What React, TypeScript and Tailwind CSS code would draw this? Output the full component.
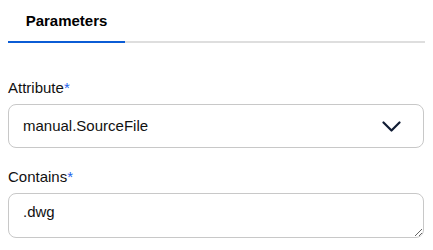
import React from "react";

export default function App() {
  return (
    <div className="w-[433px] h-[250px] bg-white px-2 text-[#111111]" style={{ fontFamily: '"Liberation Sans", Arial, sans-serif' }}>
      <div className="flex border-b-2 border-[#dedede] w-[417px]">
        <div className="w-[117px] -mb-[2px] border-b-2 border-[#0b5cd5] h-[43px] flex items-start justify-center pt-[10px]">
          <span className="text-[15px] font-bold text-black">Parameters</span>
        </div>
      </div>

      <div className="mt-[36px] w-[416px]">
        <label className="block text-[15px] leading-[18px]">
          Attribute<span className="text-[#2563eb]">*</span>
        </label>
        <div className="mt-[7px] h-[44px] flex items-center justify-between border border-[#c8c8c8] rounded-[8px] pl-[14px] pr-[22px]">
          <span className="text-[15px]">manual.SourceFile</span>
          <svg width="19" height="11" viewBox="0 0 19 11" fill="none">
            <path d="M1.5 1.5 L9.5 9.5 L17.5 1.5" stroke="#0f1b33" strokeWidth="2.2" strokeLinecap="round" strokeLinejoin="round" />
          </svg>
        </div>

        <label className="block mt-[20px] text-[15px] leading-[18px]">
          Contains<span className="text-[#2563eb]">*</span>
        </label>
        <textarea
          className="mt-[7px] block w-full h-[45px] border border-[#c8c8c8] rounded-[8px] px-[14px] pt-[7px] text-[15px] text-[#111111] outline-none"
          defaultValue=".dwg"
        />
      </div>
    </div>
  );
}
